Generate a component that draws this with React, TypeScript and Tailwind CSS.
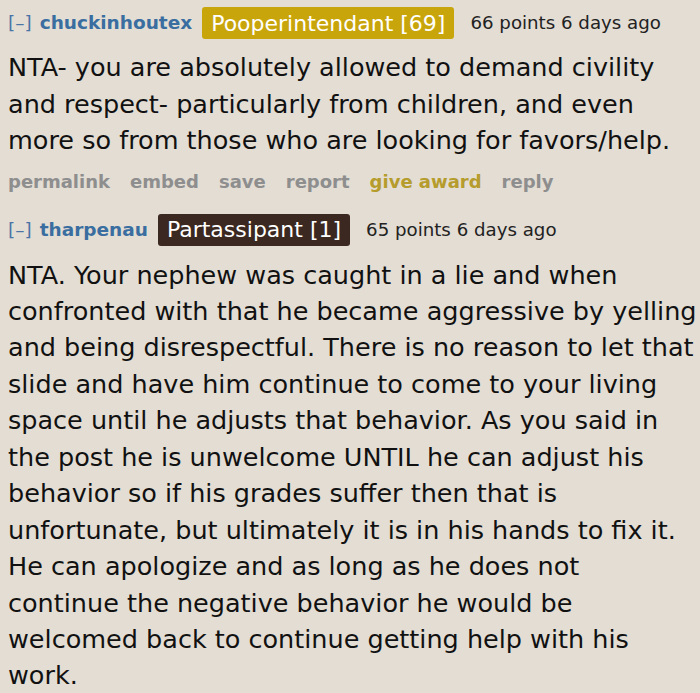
import React from "react";

const font = { fontFamily: '"DejaVu Sans", Verdana, sans-serif' };

function Header({ user, badge, badgeClass, points }: { user: string; badge: string; badgeClass: string; points: string }) {
  return (
    <div className="flex items-center h-[32px]">
      <span className="text-[18.5px] text-[#4a74a6] font-normal">[–]</span>
      <span className="ml-[8px] text-[18.5px] font-bold text-[#3a6ea0]">{user}</span>
      <span className={`ml-[10px] h-[32px] flex items-center px-[9px] rounded-[3px] text-[22px] text-white ${badgeClass}`}>{badge}</span>
      <span className="ml-[16px] text-[18.2px] text-[#222]">{points}</span>
    </div>
  );
}

export default function App() {
  const body1 = [
    "NTA- you are absolutely allowed to demand civility",
    "and respect- particularly from children, and even",
    "more so from those who are looking for favors/help.",
  ];
  const body2 = [
    "NTA. Your nephew was caught in a lie and when",
    "confronted with that he became aggressive by yelling",
    "and being disrespectful. There is no reason to let that",
    "slide and have him continue to come to your living",
    "space until he adjusts that behavior. As you said in",
    "the post he is unwelcome UNTIL he can adjust his",
    "behavior so if his grades suffer then that is",
    "unfortunate, but ultimately it is in his hands to fix it.",
    "He can apologize and as long as he does not",
    "continue the negative behavior he would be",
    "welcomed back to continue getting help with his",
    "work.",
  ];
  return (
    <div className="w-[700px] h-[693px] bg-[#e3ddd4] overflow-hidden pl-[8px] pt-[7px]" style={font}>
      <Header user="chuckinhoutex" badge="Pooperintendant [69]" badgeClass="bg-[#c9a50c]" points="66 points 6 days ago" />
      <div className="mt-[10px] text-[25.5px] leading-[36.5px] text-[#111]">
        {body1.map((l, i) => (
          <div key={i} className="whitespace-nowrap">{l}</div>
        ))}
      </div>
      <div className="mt-[9px] flex gap-[20px] text-[18px] font-bold text-[#8e8e8e]">
        <span>permalink</span>
        <span>embed</span>
        <span>save</span>
        <span>report</span>
        <span className="text-[#b59c2c]">give award</span>
        <span>reply</span>
      </div>
      <div className="mt-[19px]">
        <Header user="tharpenau" badge="Partassipant [1]" badgeClass="bg-[#3b2820]" points="65 points 6 days ago" />
      </div>
      <div className="mt-[11px] text-[25.5px] leading-[36.45px] text-[#111]">
        {body2.map((l, i) => (
          <div key={i} className="whitespace-nowrap">{l}</div>
        ))}
      </div>
    </div>
  );
}
